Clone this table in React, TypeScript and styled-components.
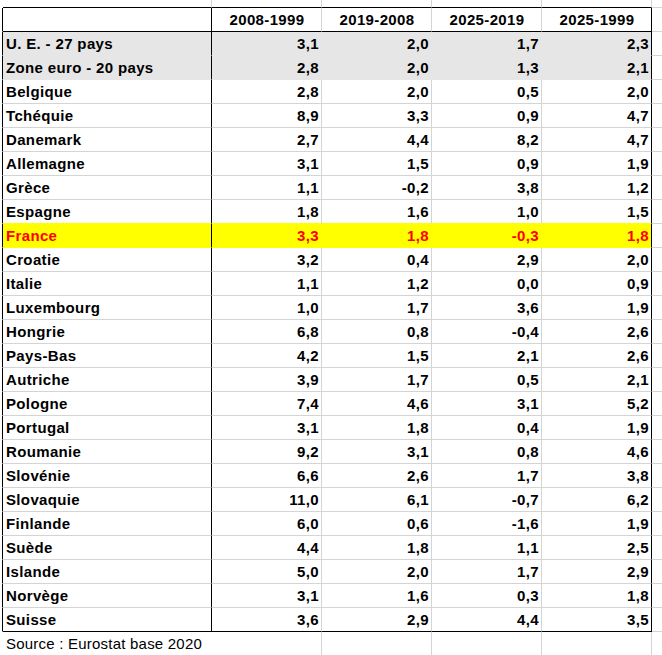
import React from 'react';
import styled, { createGlobalStyle } from 'styled-components';

const GRID = '#d4d4d4';
const INK = '#000000';
const GRAY = '#e6e6e6';
const YELLOW = '#ffff00';
const NONE = 'transparent';

const Global = createGlobalStyle`
  html, body { margin: 0; padding: 0; background: #ffffff; }
  body { font-family: "Liberation Sans", Arial, sans-serif; }
`;

const Sheet = styled.div`
  width: 662px;
  height: 655px;
  overflow: hidden;
  background: #ffffff;
  display: flex;
  flex-direction: column;
`;

const Row = styled.div<{ $h: number }>`
  display: grid;
  grid-template-columns: 3px 209px 110px 110px 110px 110px 1fr;
  height: ${(p) => p.$h}px;
  flex: none;
`;

const Cell = styled.div<{ $r: string; $b: string; $bg?: string }>`
  box-sizing: border-box;
  min-width: 0;
  border-right: 1px solid ${(p) => p.$r};
  border-bottom: 1px solid ${(p) => p.$b};
  background: ${(p) => p.$bg ?? NONE};
  display: flex;
  align-items: flex-end;
  padding: 0 2px 2px 3px;
  font-size: 15px;
  line-height: 18px;
  letter-spacing: 0.35px;
  font-weight: bold;
  white-space: nowrap;
`;

const EdgeCell = styled(Cell)`
  padding: 0;
`;

const GutterCell = styled(Cell)`
  padding: 0;
  border-right: none;
`;

const LabelCell = styled(Cell)<{ $color?: string }>`
  justify-content: flex-start;
  color: ${(p) => p.$color ?? INK};
`;

const NumCell = styled(Cell)<{ $color?: string }>`
  justify-content: flex-end;
  color: ${(p) => p.$color ?? INK};
`;

const HeadCell = styled(Cell)`
  justify-content: center;
  color: ${INK};
`;

const SourceCell = styled(Cell)`
  font-weight: normal;
  letter-spacing: 0.22px;
  color: ${INK};
  overflow: visible;
`;

type Item = { name: string; v: [string, string, string, string]; fill?: string; color?: string };

const rows: Item[] = [
  { name: 'U. E. - 27 pays', v: ['3,1', '2,0', '1,7', '2,3'], fill: GRAY },
  { name: 'Zone euro - 20 pays', v: ['2,8', '2,0', '1,3', '2,1'], fill: GRAY },
  { name: 'Belgique', v: ['2,8', '2,0', '0,5', '2,0'] },
  { name: 'Tchéquie', v: ['8,9', '3,3', '0,9', '4,7'] },
  { name: 'Danemark', v: ['2,7', '4,4', '8,2', '4,7'] },
  { name: 'Allemagne', v: ['3,1', '1,5', '0,9', '1,9'] },
  { name: 'Grèce', v: ['1,1', '-0,2', '3,8', '1,2'] },
  { name: 'Espagne', v: ['1,8', '1,6', '1,0', '1,5'] },
  { name: 'France', v: ['3,3', '1,8', '-0,3', '1,8'], fill: YELLOW, color: '#ff0000' },
  { name: 'Croatie', v: ['3,2', '0,4', '2,9', '2,0'] },
  { name: 'Italie', v: ['1,1', '1,2', '0,0', '0,9'] },
  { name: 'Luxembourg', v: ['1,0', '1,7', '3,6', '1,9'] },
  { name: 'Hongrie', v: ['6,8', '0,8', '-0,4', '2,6'] },
  { name: 'Pays-Bas', v: ['4,2', '1,5', '2,1', '2,6'] },
  { name: 'Autriche', v: ['3,9', '1,7', '0,5', '2,1'] },
  { name: 'Pologne', v: ['7,4', '4,6', '3,1', '5,2'] },
  { name: 'Portugal', v: ['3,1', '1,8', '0,4', '1,9'] },
  { name: 'Roumanie', v: ['9,2', '3,1', '0,8', '4,6'] },
  { name: 'Slovénie', v: ['6,6', '2,6', '1,7', '3,8'] },
  { name: 'Slovaquie', v: ['11,0', '6,1', '-0,7', '6,2'] },
  { name: 'Finlande', v: ['6,0', '0,6', '-1,6', '1,9'] },
  { name: 'Suède', v: ['4,4', '1,8', '1,1', '2,5'] },
  { name: 'Islande', v: ['5,0', '2,0', '1,7', '2,9'] },
  { name: 'Norvège', v: ['3,1', '1,6', '0,3', '1,8'] },
  { name: 'Suisse', v: ['3,6', '2,9', '4,4', '3,5'] },
];

const headers = ['2008-1999', '2019-2008', '2025-2019', '2025-1999'];

export default function App() {
  return (
    <>
      <Global />
      <Sheet>
        <Row $h={8}>
          <EdgeCell $r={NONE} $b={NONE} />
          <Cell $r={GRID} $b={INK} />
          <Cell $r={GRID} $b={INK} />
          <Cell $r={GRID} $b={INK} />
          <Cell $r={GRID} $b={INK} />
          <Cell $r={GRID} $b={INK} />
          <GutterCell $r={NONE} $b={GRID} />
        </Row>
        <Row $h={24}>
          <EdgeCell $r={INK} $b={NONE} />
          <LabelCell $r={INK} $b={INK} />
          {headers.map((h, i) => (
            <HeadCell key={h} $r={i === 3 ? INK : GRID} $b={INK}>
              {h}
            </HeadCell>
          ))}
          <GutterCell $r={NONE} $b={GRID} />
        </Row>
        {rows.map((r, i) => {
          const next = rows[i + 1];
          const last = i === rows.length - 1;
          const bottom = last ? INK : r.fill ?? next?.fill ?? GRID;
          return (
            <Row $h={24} key={r.name}>
              <EdgeCell $r={INK} $b={NONE} />
              <LabelCell $r={INK} $b={bottom} $bg={r.fill} $color={r.color}>
                {r.name}
              </LabelCell>
              {r.v.map((v, j) => (
                <NumCell
                  key={j}
                  $r={j === 3 ? INK : r.fill ?? GRID}
                  $b={bottom}
                  $bg={r.fill}
                  $color={r.color}
                >
                  {v}
                </NumCell>
              ))}
              <GutterCell $r={NONE} $b={GRID} />
            </Row>
          );
        })}
        <Row $h={24}>
          <EdgeCell $r={NONE} $b={NONE} />
          <SourceCell $r={NONE} $b={GRID}>Source : Eurostat base 2020</SourceCell>
          <Cell $r={GRID} $b={GRID} />
          <Cell $r={GRID} $b={GRID} />
          <Cell $r={GRID} $b={GRID} />
          <Cell $r={GRID} $b={GRID} />
          <GutterCell $r={NONE} $b={GRID} />
        </Row>
      </Sheet>
    </>
  );
}
